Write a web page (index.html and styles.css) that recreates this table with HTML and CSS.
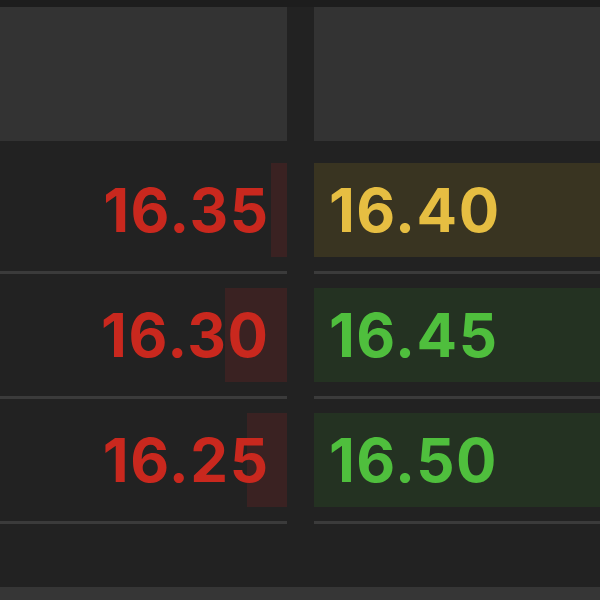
FILE: index.html
```html
<!DOCTYPE html>
<html>
<head>
<meta charset="utf-8">
<link rel="stylesheet" href="styles.css">
</head>
<body>
<div class="top-strip"></div>
<div class="book">
  <div class="head-cell"></div>
  <div class="head-cell"></div>

  <div class="cell bid">
    <div class="quote"><div class="depth" style="width:16px"></div><span class="price red">16.35</span></div>
  </div>
  <div class="cell ask">
    <div class="quote best"><span class="price yellow">16.40</span></div>
  </div>

  <div class="cell bid">
    <div class="quote"><div class="depth" style="width:62px"></div><span class="price red">16.30</span></div>
  </div>
  <div class="cell ask">
    <div class="quote green-bg"><span class="price green">16.45</span></div>
  </div>

  <div class="cell bid">
    <div class="quote"><div class="depth" style="width:40px"></div><span class="price red">16.25</span></div>
  </div>
  <div class="cell ask">
    <div class="quote green-bg"><span class="price green">16.50</span></div>
  </div>
</div>
<div class="bottom-band"></div>
</body>
</html>
```
FILE: styles.css
```css
html, body {
  margin: 0;
  padding: 0;
  background: #222222;
  width: 600px;
  height: 600px;
  overflow: hidden;
  font-family: Inter, "Liberation Sans", Arial, sans-serif;
}
body {
  display: flex;
  flex-direction: column;
}
.top-strip {
  height: 7px;
  background: #1d1d1d;
}
.book {
  display: grid;
  grid-template-columns: 287px 1fr;
  column-gap: 27px;
  flex: 1;
  align-content: start;
}
.head-cell {
  height: 134px;
  background: #333333;
  margin-bottom: 8px;
}
.cell {
  padding: 14px 0;
  border-bottom: 3px solid #3b3b3b;
}
.quote {
  position: relative;
  height: 94px;
  display: flex;
  align-items: center;
}
.bid .quote {
  justify-content: flex-end;
  padding-right: 19px;
}
.ask .quote {
  padding-left: 15px;
}
.depth {
  position: absolute;
  right: 0;
  top: 0;
  bottom: 0;
  background: #3a2222;
}
.best {
  background: #393421;
}
.green-bg {
  background: #243222;
}
.price {
  position: relative;
  font-size: 60px;
  font-weight: 700;
  letter-spacing: 1.5px;
  line-height: 1;
}
.bid .price {
  margin-right: -1.5px;
}
.red { color: #c9281e; }
.yellow { color: #e6be42; }
.green { color: #4fbf3d; }
.bottom-band {
  height: 13px;
  background: #363636;
}
```
